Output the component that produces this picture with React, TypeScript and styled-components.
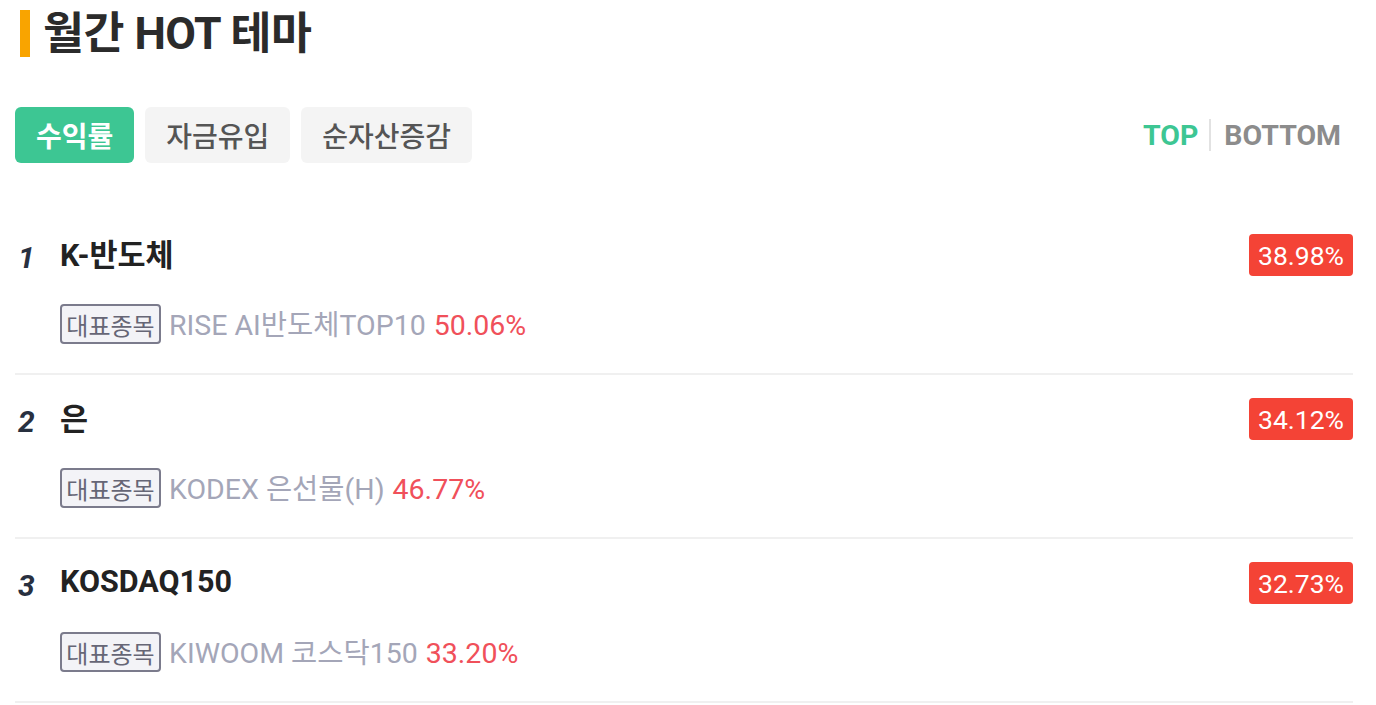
import React from "react";
import styled, { createGlobalStyle } from "styled-components";

const GlobalStyle = createGlobalStyle`
  html, body { margin: 0; padding: 0; background: #ffffff; }
  body { font-family: Roboto, "Noto Sans CJK KR", sans-serif; }
  * { box-sizing: border-box; }
`;

const Page = styled.div`
  padding: 0 23px 0 15px;
`;

const TitleRow = styled.div`
  display: flex;
  align-items: center;
  gap: 13px;
  height: 68px;
  padding-left: 5px;
  margin-bottom: 39px;
`;

const TitleBar = styled.span`
  display: block;
  width: 10px;
  height: 47px;
  background: #f9a400;
  margin-top: -2px;
`;

const Title = styled.h1`
  margin: 0;
  font-family: Roboto, "Noto Sans CJK KR", sans-serif;
  font-size: 44.5px;
  font-weight: 700;
  color: #2b2b2b;
  line-height: 1;
  letter-spacing: -0.5px;
`;

const Toolbar = styled.div`
  display: flex;
  align-items: center;
  justify-content: space-between;
`;

const Tabs = styled.div`
  display: flex;
  gap: 11px;
`;

const Tab = styled.button<{ $active?: boolean }>`
  height: 56px;
  padding: 0 21px;
  border: none;
  border-radius: 6px;
  background: ${(p) => (p.$active ? "#3dc693" : "#f4f4f4")};
  color: ${(p) => (p.$active ? "#ffffff" : "#555555")};
  font-family: "Noto Sans CJK KR", Roboto, sans-serif;
  font-size: 28px;
  font-weight: ${(p) => (p.$active ? 700 : 500)};
  cursor: pointer;
  line-height: 1;
`;

const Switch = styled.div`
  display: flex;
  align-items: center;
  margin-right: 12px;
`;

const SwitchItem = styled.span<{ $active?: boolean }>`
  font-family: Roboto, sans-serif;
  font-size: 28.5px;
  font-weight: 700;
  color: ${(p) => (p.$active ? "#3dc693" : "#8c8c8c")};
`;

const SwitchDivider = styled.span`
  display: block;
  width: 2px;
  height: 32px;
  background: #e2e2e2;
  margin: 0 13px 0 11px;
`;

const List = styled.ul`
  list-style: none;
  margin: 48px 0 0;
  padding: 0;
`;

const Row = styled.li`
  padding: 23px 0 29px;
  border-bottom: 2px solid #f0f0f0;
`;

const RowHead = styled.div`
  display: flex;
  align-items: center;
  height: 42px;
`;

const Rank = styled.span`
  width: 45px;
  padding-left: 3px;
  font-family: Roboto, sans-serif;
  font-size: 30px;
  font-style: italic;
  font-weight: 700;
  color: #28303f;
  margin-top: 4px;
`;

const Name = styled.span`
  flex: 1;
  font-family: Roboto, "Noto Sans CJK KR", sans-serif;
  font-size: 30.5px;
  font-weight: 700;
  color: #222222;
  margin-top: -4px;
`;

const Rate = styled.span`
  display: flex;
  align-items: center;
  height: 42px;
  padding: 0 9px;
  border-radius: 4px;
  background: #f44336;
  color: #ffffff;
  font-family: Roboto, sans-serif;
  font-size: 26.5px;
`;

const Sub = styled.div`
  display: flex;
  align-items: center;
  margin: 28px 0 0 45px;
  height: 40px;
`;

const Tag = styled.span`
  display: flex;
  align-items: center;
  justify-content: center;
  width: 101px;
  height: 40px;
  border: 2px solid #7b7b8c;
  border-radius: 4px;
  background: #f3f3f7;
  color: #666676;
  font-family: "Noto Sans CJK KR", sans-serif;
  font-size: 24px;
  white-space: nowrap;
`;

const Stock = styled.span`
  margin: -4px 0 0 8px;
  font-family: Roboto, "Noto Sans CJK KR", sans-serif;
  font-size: 28.5px;
  color: #a4a6b8;
`;

const StockRate = styled.span`
  margin-left: 8px;
  color: #f0505a;
`;

const rows = [
  { rank: 1, name: "K-반도체", rate: "38.98%", stock: "RISE AI반도체TOP10", stockRate: "50.06%" },
  { rank: 2, name: "은", rate: "34.12%", stock: "KODEX 은선물(H)", stockRate: "46.77%" },
  { rank: 3, name: "KOSDAQ150", rate: "32.73%", stock: "KIWOOM 코스닥150", stockRate: "33.20%" },
];

export default function App() {
  return (
    <>
      <GlobalStyle />
      <Page>
        <TitleRow>
          <TitleBar />
          <Title>월간 HOT 테마</Title>
        </TitleRow>
        <Toolbar>
          <Tabs>
            <Tab $active>수익률</Tab>
            <Tab>자금유입</Tab>
            <Tab>순자산증감</Tab>
          </Tabs>
          <Switch>
            <SwitchItem $active>TOP</SwitchItem>
            <SwitchDivider />
            <SwitchItem>BOTTOM</SwitchItem>
          </Switch>
        </Toolbar>
        <List>
          {rows.map((r) => (
            <Row key={r.rank}>
              <RowHead>
                <Rank>{r.rank}</Rank>
                <Name>{r.name}</Name>
                <Rate>{r.rate}</Rate>
              </RowHead>
              <Sub>
                <Tag>대표종목</Tag>
                <Stock>
                  {r.stock}
                  <StockRate>{r.stockRate}</StockRate>
                </Stock>
              </Sub>
            </Row>
          ))}
        </List>
      </Page>
    </>
  );
}
